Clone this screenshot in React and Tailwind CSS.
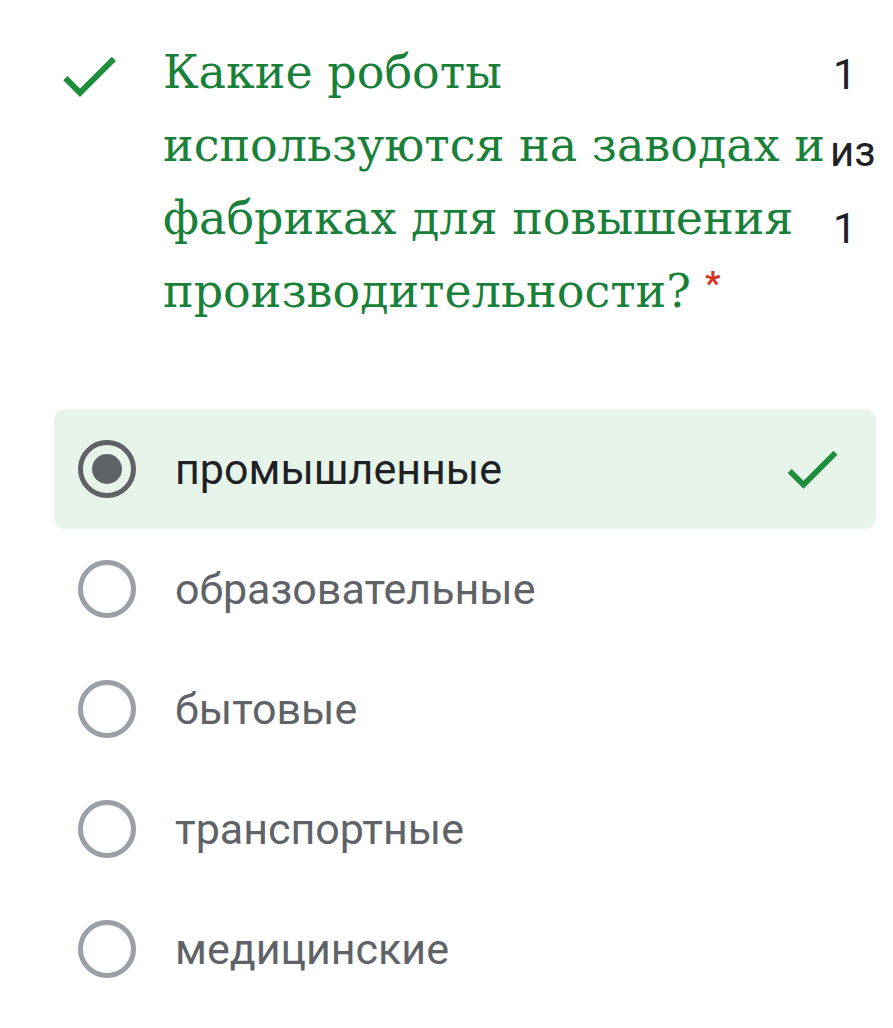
const OPTIONS = ['промышленные', 'образовательные', 'бытовые', 'транспортные', 'медицинские'];

const Check = ({ className }) => (
  <svg viewBox="0 0 24 24" className={className} fill="currentColor">
    <path d="M9 16.17L4.83 12l-1.42 1.41L9 19 21 7l-1.41-1.41z" />
  </svg>
);

const Radio = ({ checked }) => (
  <div
    className={`w-[58px] h-[58px] rounded-full border-[5px] flex items-center justify-center shrink-0 ${
      checked ? 'border-[#5f6368]' : 'border-[#9aa0a6]'
    }`}
  >
    {checked && <div className="w-[30px] h-[30px] rounded-full bg-[#5f6368]" />}
  </div>
);

export default function App() {
  return (
    <div className="w-[893px] h-[1028px] bg-white overflow-hidden pl-[54px] pr-[17px] pt-[36px]">
      {/* Вопрос */}
      <div className="flex">
        <div className="w-[109px] shrink-0 pt-[4px]">
          <Check className="w-[72px] h-[72px] text-[#1e8e3e] -ml-[1px]" />
        </div>
        <div className="w-[666px] shrink-0 text-[#188038] text-[46px] leading-[73px] font-['DejaVu_Serif',serif]">
          Какие роботы используются на заводах и фабриках для повышения производительности?
          <span className="ml-[14px] text-[#d93025] font-['Roboto',sans-serif] font-bold text-[34px] leading-none align-[12px]">*</span>
        </div>
        <div className="flex-1 text-[#202124] text-[42px] leading-[77px] font-['Roboto',sans-serif] pl-[1px]">
          <div className="pl-[3px]">1</div>
          <div>из</div>
          <div className="pl-[3px]">1</div>
        </div>
      </div>

      {/* Варианты */}
      <div className="mt-[81px] flex flex-col">
        {OPTIONS.map((opt, i) => (
          <div
            key={opt}
            className={`h-[120px] flex items-center pl-[24px] pr-[30px] rounded-[12px] ${
              i === 0 ? 'bg-[#e6f4ea]' : ''
            }`}
          >
            <Radio checked={i === 0} />
            <span
              className={`ml-[39px] flex-1 text-[43px] font-['Roboto',sans-serif] ${
                i === 0 ? 'text-[#202124]' : 'text-[#5f6368]'
              }`}
            >
              {opt}
            </span>
            {i === 0 && <Check className="w-[68px] h-[68px] text-[#1e8e3e]" />}
          </div>
        ))}
      </div>
    </div>
  );
}
